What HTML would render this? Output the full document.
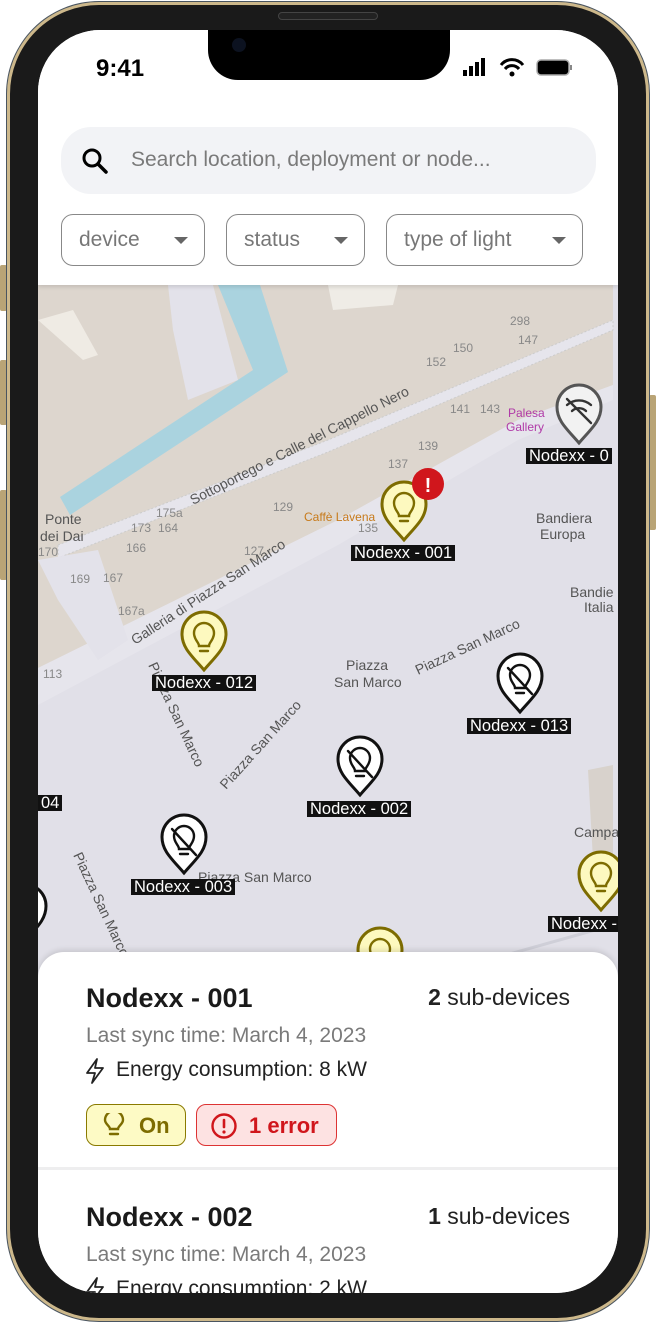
<!DOCTYPE html>
<html><head><meta charset="utf-8">
<style>
*{margin:0;padding:0;box-sizing:border-box}
body{width:656px;height:1323px;background:#fff;position:relative;overflow:hidden;font-family:"Liberation Sans",sans-serif}
.frame{position:absolute;left:7px;top:2px;width:642px;height:1319px;border-radius:92px;background:#1a1a1a;border:3px solid #cdb88b;box-shadow:0 0 0 1px #4a5560}
.btn{position:absolute;background:#b9a476;border-radius:2px}
.screen{position:absolute;left:38px;top:30px;width:580px;height:1263px;border-radius:62px;overflow:hidden;background:#fff}
.notch{position:absolute;left:170px;top:0;width:242px;height:50px;background:#000;border-radius:0 0 30px 30px}
.time{position:absolute;left:58px;top:25px;font-size:24px;font-weight:bold;color:#000}
.search{position:absolute;left:23px;top:97px;width:535px;height:67px;border-radius:30px;background:#f2f3f6}
.search span{position:absolute;left:70px;top:21px;font-size:21px;color:#7a7a7a}
.dd{position:absolute;top:184px;height:52px;border:1.5px solid #888;border-radius:12px;font-size:21px;color:#777;padding:13px 0 0 17px}
.dd i{position:absolute;right:16px;top:22px;border-left:7px solid transparent;border-right:7px solid transparent;border-top:7px solid #666}
.map{position:absolute;left:0;top:255px;width:580px;height:700px;background:#e1e0e8}
.lbl{position:absolute;background:#111;color:#fff;font-size:16.5px;padding:0 3px;line-height:16px;white-space:nowrap}
.sheet{position:absolute;left:0;top:922px;width:580px;height:400px;background:#fff;border-radius:26px 26px 0 0;box-shadow:0 -2px 6px rgba(0,0,0,.12)}
.t{position:absolute;left:48px;font-size:27px;font-weight:bold;color:#1a1a1a}
.sd{position:absolute;right:48px;font-size:23px;color:#222}
.sy{position:absolute;left:48px;font-size:21px;color:#7a7a7a}
.en{position:absolute;left:78px;font-size:21px;color:#222}
</style></head><body>
<div class="btn" style="left:0;top:265px;width:7px;height:46px"></div>
<div class="btn" style="left:0;top:360px;width:7px;height:65px"></div>
<div class="btn" style="left:0;top:490px;width:7px;height:90px"></div>
<div class="btn" style="left:649px;top:395px;width:7px;height:135px"></div>
<div class="frame"></div>
<div style="position:absolute;left:278px;top:12px;width:100px;height:8px;border-radius:4px;background:#222;border:1px solid #444"></div>
<div class="screen">
 <div class="map">
  <svg width="580" height="700" viewBox="40 285 580 700" style="position:absolute;left:0;top:0">
   <polygon points="40,285 615,285 615,385 520,420 340,520 40,668" fill="#ddd6ce"/>
   <polygon points="40,668 340,520 520,420 615,385 615,400 520,440 340,545 40,705" fill="#e6e5ec"/>
   <polygon points="60,545 330,440 615,320 615,330 330,452 60,558" fill="#e6e5ec" stroke="#ccc" stroke-dasharray="2 2"/>
   <polygon points="220,285 262,285 290,372 72,515 62,497 255,370" fill="#aad3df"/>
   <polygon points="170,285 215,285 240,380 190,400 175,330" fill="#e3e2ea"/>
   <polygon points="40,320 75,310 100,355 85,360" fill="#efebe4"/>
   <polygon points="40,560 100,550 130,640 100,660 60,600" fill="#e3e2ea"/>
   <polygon points="330,285 400,285 395,305 335,310" fill="#efece6"/>
   <polygon points="590,770 615,765 615,860 595,860" fill="#d8d2cc"/>
   <line x1="490" y1="960" x2="615" y2="925" stroke="#cfcfd8" stroke-width="3"/>
   <g font-family="Liberation Sans" font-size="12" fill="#888">
    <text x="360" y="532">135</text><text x="390" y="468">137</text><text x="420" y="450">139</text><text x="452" y="413">141</text><text x="482" y="413">143</text>
    <text x="428" y="366">152</text><text x="455" y="352">150</text><text x="520" y="344">147</text><text x="512" y="325">298</text>
    <text x="275" y="511">129</text><text x="246" y="555">127</text><text x="158" y="517">175a</text><text x="133" y="532">173</text><text x="160" y="532">164</text>
    <text x="128" y="552">166</text><text x="105" y="582">167</text><text x="72" y="583">169</text><text x="40" y="556">170</text><text x="120" y="615">167a</text><text x="45" y="678">113</text>
   </g>
   <g font-family="Liberation Sans" font-size="14" fill="#555">
    <text transform="translate(195,505) rotate(-27)">Sottoportego e Calle del Cappello Nero</text>
    <text transform="translate(137,645) rotate(-33)">Galleria di Piazza San Marco</text>
    <text transform="translate(420,675) rotate(-25)">Piazza San Marco</text>
    <text transform="translate(228,790) rotate(-48)">Piazza San Marco</text>
    <text transform="translate(150,665) rotate(65)">Piazza San Marco</text>
    <text transform="translate(75,855) rotate(65)">Piazza San Marco</text>
    <text x="200" y="882">Piazza San Marco</text>
    <text x="348" y="670">Piazza</text><text x="336" y="687">San Marco</text>
    <text x="538" y="523">Bandiera</text><text x="542" y="539">Europa</text>
    <text x="572" y="597">Bandie</text><text x="586" y="612">Italia</text>
    <text x="47" y="524">Ponte</text><text x="42" y="541">dei Dai</text>
    <text x="576" y="837">Campa</text>
   </g>
   <text x="306" y="521" font-family="Liberation Sans" font-size="12" fill="#c77a1a">Caffè Lavena</text>
   <text x="510" y="417" font-family="Liberation Sans" font-size="12" fill="#b03aa8">Palesa</text>
   <text x="508" y="431" font-family="Liberation Sans" font-size="12" fill="#b03aa8">Gallery</text>
  </svg>
 </div>
 <svg width="580" height="700" viewBox="40 285 580 700" style="position:absolute;left:0;top:255px">
  <defs>
   <path id="pin" d="M0,30 C-12,16 -22,8 -22,-6 A22,22 0 0 1 22,-6 C22,8 12,16 0,30 Z"/>
   <g id="bulb" fill="none" stroke-width="2.4" stroke-linecap="round"><path d="M-5,6 C-5,2 -10,0 -10,-7 A10,10 0 0 1 10,-7 C10,0 5,2 5,6 Z"/><path d="M-4,11 H4"/></g>
   <g id="off" fill="none" stroke="#111" stroke-width="2.4" stroke-linecap="round"><path d="M-5,6 C-5,2 -10,0 -10,-7 A10,10 0 0 1 10,-7 C10,0 5,2 5,6 Z"/><path d="M-4,11 H4"/><path d="M-12,-14 L12,12"/></g>
  </defs>
  <g transform="translate(406,510)"><use href="#pin" fill="#fdf9bf" stroke="#7d6c00" stroke-width="3"/><use href="#bulb" stroke="#7d6c00"/></g>
  <circle cx="430" cy="484" r="16" fill="#d0161c"/><text x="430" y="492" text-anchor="middle" fill="#fff" font-family="Liberation Sans" font-weight="bold" font-size="20">!</text>
  <g transform="translate(206,640)"><use href="#pin" fill="#fdf9bf" stroke="#7d6c00" stroke-width="3"/><use href="#bulb" stroke="#7d6c00"/></g>
  <g transform="translate(603,880)"><use href="#pin" fill="#fdf9bf" stroke="#7d6c00" stroke-width="3"/><use href="#bulb" stroke="#7d6c00"/></g>
  <g transform="translate(382,956)"><use href="#pin" fill="#fdf9bf" stroke="#7d6c00" stroke-width="3"/><use href="#bulb" stroke="#7d6c00"/></g>
  <g transform="translate(581,413)"><use href="#pin" fill="#f2f2f2" stroke="#555" stroke-width="3"/>
   <g fill="none" stroke="#333" stroke-width="2.4" stroke-linecap="round"><path d="M-12,-8 A18,18 0 0 1 12,-8"/><path d="M-7,-2 A10,10 0 0 1 7,-2"/><path d="M-12,-14 L12,10"/></g></g>
  <g transform="translate(522,682)"><use href="#pin" fill="#fff" stroke="#111" stroke-width="3"/><use href="#off"/></g>
  <g transform="translate(362,765)"><use href="#pin" fill="#fff" stroke="#111" stroke-width="3"/><use href="#off"/></g>
  <g transform="translate(186,843)"><use href="#pin" fill="#fff" stroke="#111" stroke-width="3"/><use href="#off"/></g>
  <g transform="translate(26,912)"><use href="#pin" fill="#fff" stroke="#111" stroke-width="3"/></g>
 </svg>
 <div class="lbl" style="left:313px;top:515px">Nodexx - 001</div>
 <div class="lbl" style="left:488px;top:418px">Nodexx - 0</div>
 <div class="lbl" style="left:114px;top:645px">Nodexx - 012</div>
 <div class="lbl" style="left:429px;top:688px">Nodexx - 013</div>
 <div class="lbl" style="left:269px;top:771px">Nodexx - 002</div>
 <div class="lbl" style="left:93px;top:849px">Nodexx - 003</div>
 <div class="lbl" style="left:510px;top:886px">Nodexx - 0</div>
 <div class="lbl" style="left:0;top:765px">04</div>
 <div style="position:absolute;left:0;top:0;width:580px;height:255px;background:#fff;box-shadow:0 2px 4px rgba(0,0,0,.12)"></div>
 <div class="time">9:41</div>
 <svg style="position:absolute;left:423px;top:27px" width="120" height="22">
  <rect x="2" y="13" width="4" height="6" fill="#000"/><rect x="8" y="9" width="4" height="10" fill="#000"/><rect x="14" y="5" width="4" height="14" fill="#000"/><rect x="20" y="1" width="4" height="18" fill="#000"/>
  <path d="M40,8 A14,14 0 0 1 62,8" fill="none" stroke="#000" stroke-width="3"/><path d="M44,12 A9,9 0 0 1 58,12" fill="none" stroke="#000" stroke-width="3"/><circle cx="51" cy="17" r="2.5" fill="#000"/>
  <rect x="76" y="3" width="32" height="15" rx="4" fill="#000" stroke="#aaa" stroke-width="1.5"/><rect x="109" y="8" width="2" height="5" fill="#888"/>
 </svg>
 <div class="notch"></div>
 <div style="position:absolute;left:194px;top:8px;width:14px;height:14px;border-radius:50%;background:#0c1220"></div>
 <div class="search">
  <svg style="position:absolute;left:20px;top:20px" width="28" height="28"><circle cx="11" cy="11" r="8" fill="none" stroke="#000" stroke-width="3"/><path d="M17,17 L25,25" stroke="#000" stroke-width="3.5" stroke-linecap="round"/></svg>
  <span>Search location, deployment or node...</span>
 </div>
 <div class="dd" style="left:23px;width:144px">device<i></i></div>
 <div class="dd" style="left:188px;width:139px">status<i></i></div>
 <div class="dd" style="left:348px;width:197px">type of light<i></i></div>
 <div class="sheet">
  <div class="t" style="top:31px">Nodexx - 001</div>
  <div class="sd" style="top:32px"><b>2</b> sub-devices</div>
  <div class="sy" style="top:72px">Last sync time: March 4, 2023</div>
  <svg style="position:absolute;left:46px;top:105px" width="22" height="28"><path d="M13,2 L3,16 H11 L8,26 L19,11 H11 Z" fill="none" stroke="#222" stroke-width="1.8" stroke-linejoin="round"/></svg>
  <div class="en" style="top:106px">Energy consumption: 8 kW</div>
  <div style="position:absolute;left:48px;top:152px;width:100px;height:42px;border:1.5px solid #8a7a00;border-radius:10px;background:#fdfac5;color:#7d6c00;font-size:22px;font-weight:bold">
   <svg style="position:absolute;left:16px;top:8px" width="22" height="26" fill="none" stroke="#7d6c00" stroke-width="2.4" stroke-linecap="round"><path d="M7,16 C7,13 2,11 2,7 A9,9 0 0 1 20,7 C20,11 15,13 15,16 Z"/><path d="M7,21 H15"/></svg>
   <span style="position:absolute;left:52px;top:8px">On</span></div>
  <div style="position:absolute;left:158px;top:152px;width:141px;height:42px;border:1.5px solid #d33;border-radius:10px;background:#fde2e2;color:#d0161c;font-size:22px;font-weight:bold">
   <svg style="position:absolute;left:13px;top:7px" width="28" height="28"><circle cx="14" cy="14" r="11.5" fill="none" stroke="#d0161c" stroke-width="2.4"/><path d="M14,8 V15" stroke="#d0161c" stroke-width="2.6" stroke-linecap="round"/><circle cx="14" cy="20" r="1.6" fill="#d0161c"/></svg>
   <span style="position:absolute;left:52px;top:8px">1 error</span></div>
  <div style="position:absolute;left:0;top:215px;width:580px;height:3px;background:#eeeeef"></div>
  <div class="t" style="top:250px">Nodexx - 002</div>
  <div class="sd" style="top:251px"><b>1</b> sub-devices</div>
  <div class="sy" style="top:291px">Last sync time: March 4, 2023</div>
  <svg style="position:absolute;left:46px;top:324px" width="22" height="28"><path d="M13,2 L3,16 H11 L8,26 L19,11 H11 Z" fill="none" stroke="#222" stroke-width="1.8" stroke-linejoin="round"/></svg>
  <div class="en" style="top:325px">Energy consumption: 2 kW</div>
 </div>
</div>
</body></html>
